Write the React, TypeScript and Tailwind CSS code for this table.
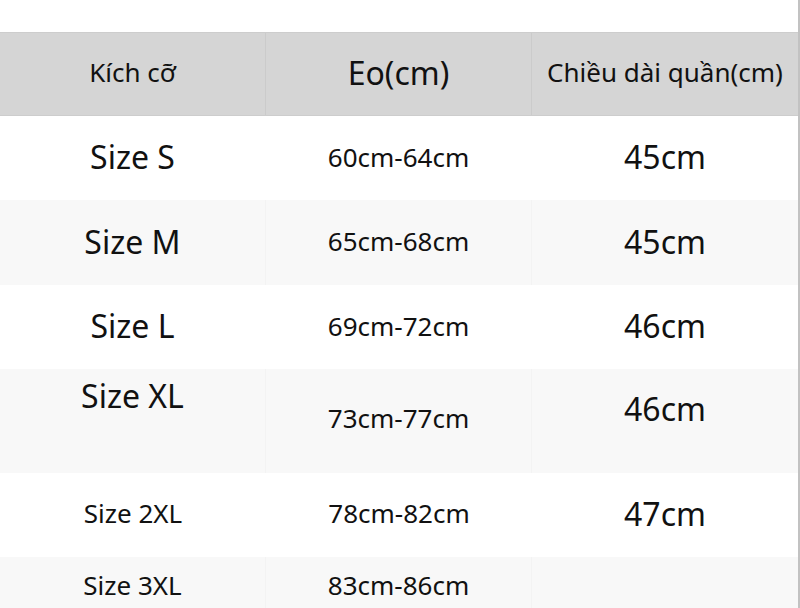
const rows = [
  { size: "Size S", waist: "60cm-64cm", length: "45cm", bg: "bg-white", line: "border-white", h: "h-[84px]" },
  { size: "Size M", waist: "65cm-68cm", length: "45cm", bg: "bg-[#f8f8f8]", line: "border-[#f3f3f3]", h: "h-[85px]" },
  { size: "Size L", waist: "69cm-72cm", length: "46cm", bg: "bg-white", line: "border-white", h: "h-[84px]" },
];

export default function App() {
  return (
    <div className="w-[800px] h-[608px] overflow-hidden bg-white text-[#111] font-['Noto_Sans',sans-serif]">
      <div className="w-[800px] h-full border-r-2 border-[#c2c2c2]">
        <div className="h-[32px]" />

        {/* header */}
        <div className="grid grid-cols-3 h-[84px] bg-[#d5d5d5] border-y border-[#cdcdcd]">
          <div className="flex items-center justify-center border-r border-[#cbcbcb] text-[26px] pb-[4px]">Kích cỡ</div>
          <div className="flex items-center justify-center border-r border-[#cbcbcb] text-[32px] pb-[2px]">Eo(cm)</div>
          <div className="flex items-center justify-center text-[26px] pb-[3px]">Chiều dài quần(cm)</div>
        </div>

        {rows.map((r) => (
          <div key={r.size} className={`grid grid-cols-3 ${r.h} ${r.bg}`}>
            <div className={`flex items-center justify-center border-r ${r.line} text-[32px] pb-[2px]`}>{r.size}</div>
            <div className={`flex items-center justify-center border-r ${r.line} text-[26px] pb-[2px]`}>{r.waist}</div>
            <div className="flex items-center justify-center text-[32px] pb-[2px]">{r.length}</div>
          </div>
        ))}

        {/* XL row is taller, cells sit at different heights */}
        <div className="grid grid-cols-3 h-[104px] bg-[#f8f8f8]">
          <div className="flex justify-center pt-[5px] border-r border-[#f3f3f3] text-[32px] leading-[44px]">Size XL</div>
          <div className="flex justify-center pt-[31px] border-r border-[#f3f3f3] text-[26px] leading-[36px]">73cm-77cm</div>
          <div className="flex justify-center pt-[18px] text-[32px] leading-[44px]">46cm</div>
        </div>

        <div className="grid grid-cols-3 h-[84px] bg-white">
          <div className="flex items-center justify-center text-[26px] pb-[3px]">Size 2XL</div>
          <div className="flex items-center justify-center text-[26px] pb-[3px]">78cm-82cm</div>
          <div className="flex items-center justify-center text-[32px] pb-[2px]">47cm</div>
        </div>

        <div className="grid grid-cols-3 h-[56px] bg-[#f8f8f8]">
          <div className="flex items-center justify-center border-r border-[#f3f3f3] text-[26px]">Size 3XL</div>
          <div className="flex items-center justify-center border-r border-[#f3f3f3] text-[26px]">83cm-86cm</div>
          <div />
        </div>
      </div>
    </div>
  );
}
